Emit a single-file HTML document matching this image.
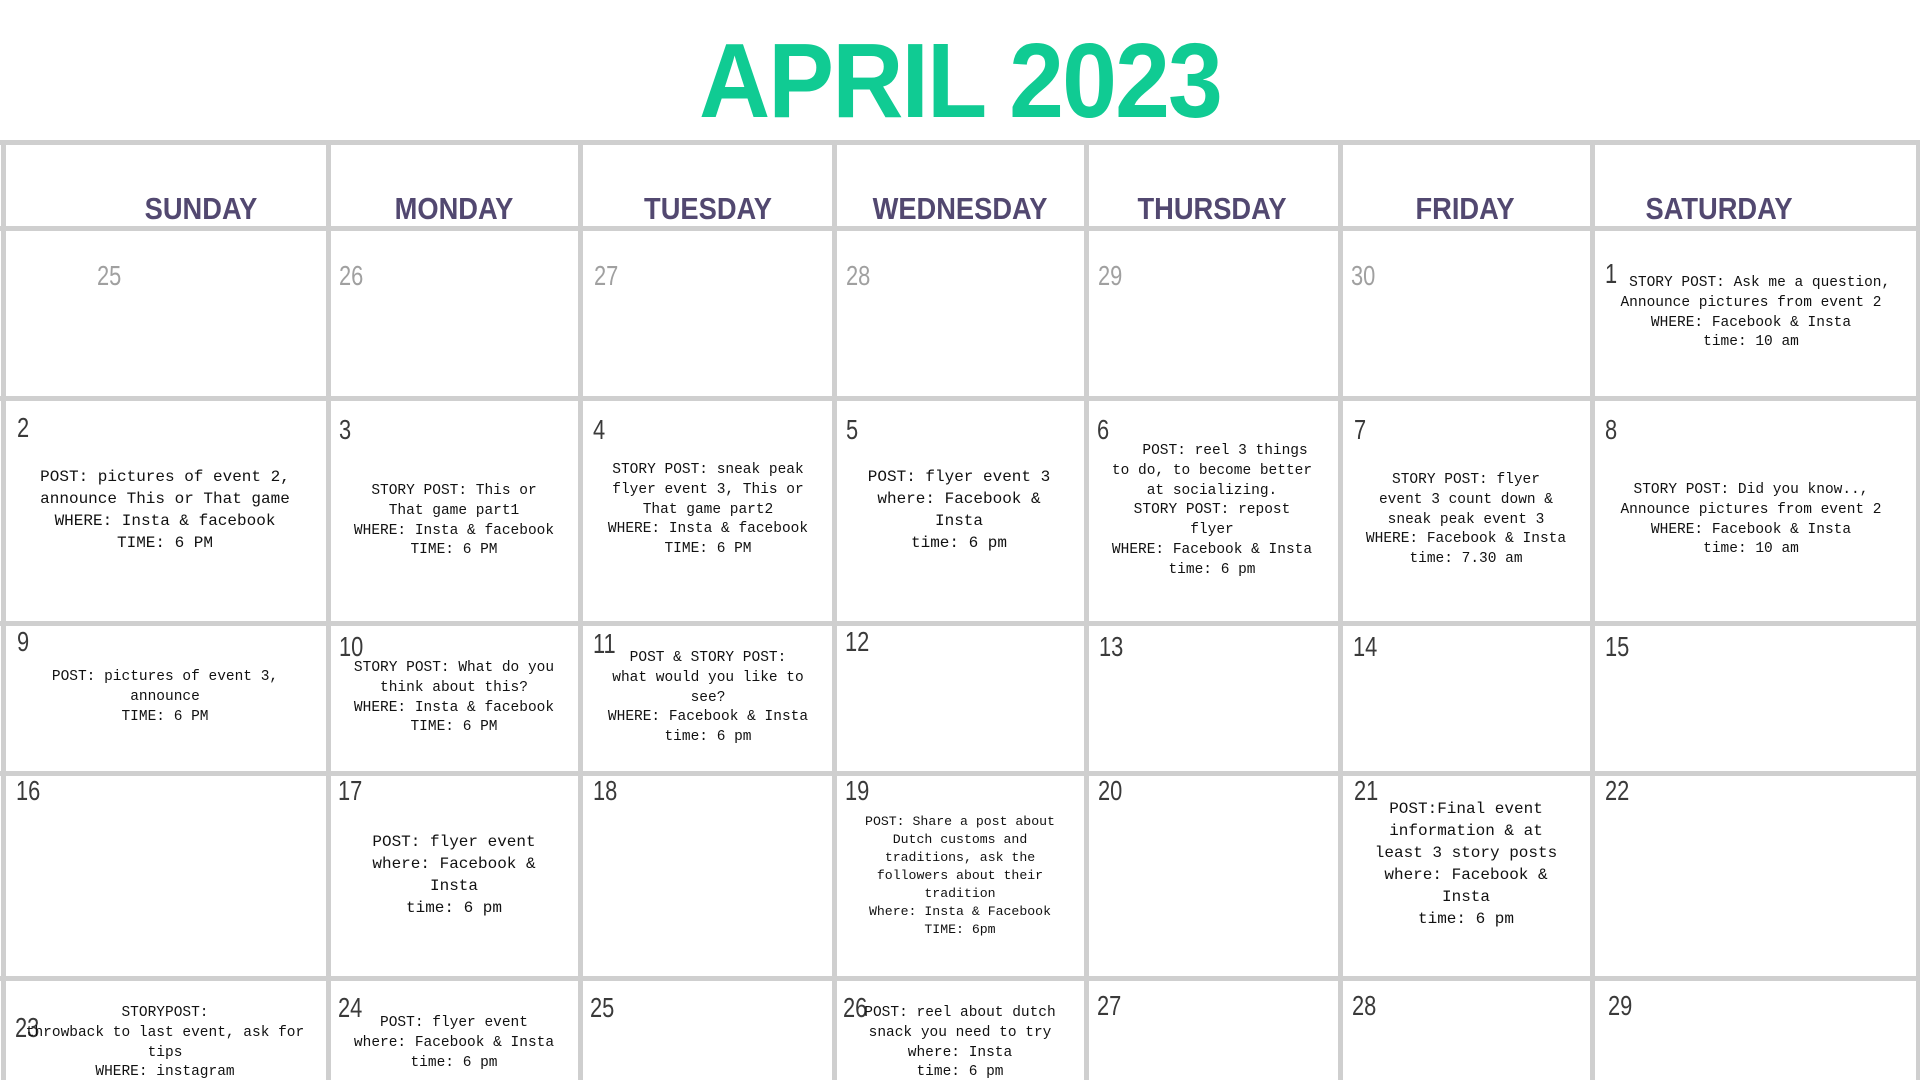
<!DOCTYPE html>
<html><head><meta charset="utf-8">
<style>
*{margin:0;padding:0;box-sizing:border-box}
html,body{width:1920px;height:1080px;overflow:hidden;background:#fff;position:relative}
.title{position:absolute;left:0;width:1920px;top:28px;text-align:center;font:bold 106px/106px "Liberation Sans",sans-serif;color:#10cb93;transform:scaleX(0.93);letter-spacing:-2px}
.h{position:absolute;background:#cfcfcf;height:5px;left:0;width:1920px}
.v{position:absolute;background:#cfcfcf;width:5px;top:140px;height:940px}
.day{position:absolute;top:192px;width:260px;text-align:center;font:bold 31px/34px "Liberation Sans",sans-serif;color:#524870;transform:scaleX(0.88)}
.n{position:absolute;font:normal 28px/28px "Liberation Sans",sans-serif;color:#3a3a3a;transform:scaleX(0.78);transform-origin:left top}
.g{color:#a0a0a0}
.t{position:absolute;width:320px;text-align:center;white-space:pre;font-family:"Liberation Mono",monospace;color:#111;font-size:14.5px;line-height:19.8px}
.b{font-size:16px;line-height:22px}
.s{font-size:13.2px;line-height:18px}
</style></head><body>
<div class="title">APRIL 2023</div>

<div class="h" style="top:140px"></div>
<div class="h" style="top:226px"></div>
<div class="h" style="top:396px"></div>
<div class="h" style="top:621px"></div>
<div class="h" style="top:771px"></div>
<div class="h" style="top:976px"></div>
<div class="v" style="left:1px"></div>
<div class="v" style="left:326px"></div>
<div class="v" style="left:578px"></div>
<div class="v" style="left:832px"></div>
<div class="v" style="left:1084px"></div>
<div class="v" style="left:1338px"></div>
<div class="v" style="left:1590px"></div>
<div class="v" style="left:1916px"></div>

<div class="day" style="left:71px">SUNDAY</div>
<div class="day" style="left:324px">MONDAY</div>
<div class="day" style="left:578px">TUESDAY</div>
<div class="day" style="left:830px">WEDNESDAY</div>
<div class="day" style="left:1082px">THURSDAY</div>
<div class="day" style="left:1335px">FRIDAY</div>
<div class="day" style="left:1589px">SATURDAY</div>

<div class="n g" style="left:97px;top:262px">25</div>
<div class="n g" style="left:339px;top:262px">26</div>
<div class="n g" style="left:594px;top:262px">27</div>
<div class="n g" style="left:846px;top:262px">28</div>
<div class="n g" style="left:1098px;top:262px">29</div>
<div class="n g" style="left:1351px;top:262px">30</div>
<div class="n" style="left:1605px;top:260px">1</div>

<div class="n" style="left:17px;top:414px">2</div>
<div class="n" style="left:339px;top:416px">3</div>
<div class="n" style="left:593px;top:416px">4</div>
<div class="n" style="left:846px;top:416px">5</div>
<div class="n" style="left:1097px;top:416px">6</div>
<div class="n" style="left:1354px;top:416px">7</div>
<div class="n" style="left:1605px;top:416px">8</div>

<div class="n" style="left:17px;top:628px">9</div>
<div class="n" style="left:339px;top:633px">10</div>
<div class="n" style="left:593px;top:630px">11</div>
<div class="n" style="left:845px;top:628px">12</div>
<div class="n" style="left:1099px;top:633px">13</div>
<div class="n" style="left:1353px;top:633px">14</div>
<div class="n" style="left:1605px;top:633px">15</div>

<div class="n" style="left:16px;top:777px">16</div>
<div class="n" style="left:338px;top:777px">17</div>
<div class="n" style="left:593px;top:777px">18</div>
<div class="n" style="left:845px;top:777px">19</div>
<div class="n" style="left:1098px;top:777px">20</div>
<div class="n" style="left:1354px;top:777px">21</div>
<div class="n" style="left:1605px;top:777px">22</div>

<div class="n" style="left:15px;top:1014px">23</div>
<div class="n" style="left:338px;top:994px">24</div>
<div class="n" style="left:590px;top:994px">25</div>
<div class="n" style="left:843px;top:994px">26</div>
<div class="n" style="left:1097px;top:992px">27</div>
<div class="n" style="left:1352px;top:992px">28</div>
<div class="n" style="left:1608px;top:992px">29</div>

<div class="t" style="left:1591px;top:274px">  STORY POST: Ask me a question,
Announce pictures from event 2
WHERE: Facebook &amp; Insta
time: 10 am</div>

<div class="t b" style="left:5px;top:466px">POST: pictures of event 2,
announce This or That game
WHERE: Insta &amp; facebook
TIME: 6 PM</div>
<div class="t" style="left:294px;top:482px">STORY POST: This or
That game part1
WHERE: Insta &amp; facebook
TIME: 6 PM</div>
<div class="t" style="left:548px;top:461px">STORY POST: sneak peak
flyer event 3, This or
That game part2
WHERE: Insta &amp; facebook
TIME: 6 PM</div>
<div class="t b" style="left:799px;top:466px">POST: flyer event 3
where: Facebook &amp;
Insta
time: 6 pm</div>
<div class="t" style="left:1052px;top:442px">   POST: reel 3 things
to do, to become better
at socializing.
STORY POST: repost
flyer
WHERE: Facebook &amp; Insta
time: 6 pm</div>
<div class="t" style="left:1306px;top:471px">STORY POST: flyer
event 3 count down &amp;
sneak peak event 3
WHERE: Facebook &amp; Insta
time: 7.30 am</div>
<div class="t" style="left:1591px;top:481px">STORY POST: Did you know..,
Announce pictures from event 2
WHERE: Facebook &amp; Insta
time: 10 am</div>

<div class="t" style="left:5px;top:668px">POST: pictures of event 3,
announce
TIME: 6 PM</div>
<div class="t" style="left:294px;top:659px">STORY POST: What do you
think about this?
WHERE: Insta &amp; facebook
TIME: 6 PM</div>
<div class="t" style="left:548px;top:649px">POST &amp; STORY POST:
what would you like to
see?
WHERE: Facebook &amp; Insta
time: 6 pm</div>

<div class="t b" style="left:294px;top:831px">POST: flyer event
where: Facebook &amp;
Insta
time: 6 pm</div>
<div class="t s" style="left:800px;top:813px">POST: Share a post about
Dutch customs and
traditions, ask the
followers about their
tradition
Where: Insta &amp; Facebook
TIME: 6pm</div>
<div class="t b" style="left:1306px;top:798px">POST:Final event
information &amp; at
least 3 story posts
where: Facebook &amp;
Insta
time: 6 pm</div>

<div class="t" style="left:5px;top:1004px">STORYPOST:
throwback to last event, ask for
tips
WHERE: instagram</div>
<div class="t" style="left:294px;top:1014px">POST: flyer event
where: Facebook &amp; Insta
time: 6 pm</div>
<div class="t" style="left:800px;top:1004px">POST: reel about dutch
snack you need to try
where: Insta
time: 6 pm</div>
</body></html>
